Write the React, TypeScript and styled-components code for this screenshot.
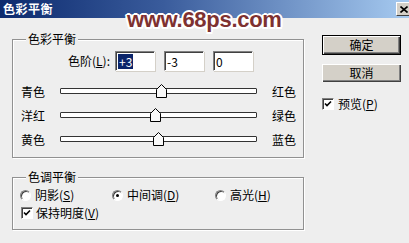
import React from 'react';
import styled, { createGlobalStyle } from 'styled-components';

const Global = createGlobalStyle`
  html, body { margin: 0; padding: 0; background: #eeeeee; }
  body {
    font-family: "Noto Sans CJK SC", "Noto Sans", sans-serif;
    font-size: 12px;
    color: #000;
  }
`;

const Window = styled.div`
  position: relative;
  width: 409px;
  height: 243px;
  overflow: hidden;
  background: #eeeeee;
  display: flex;
  flex-direction: column;
`;

const TitleBar = styled.div`
  flex: none;
  height: 18px;
  display: flex;
  align-items: center;
  justify-content: space-between;
  padding-left: 3px;
  background: linear-gradient(to right, #0c2a6e 0%, #3a5c9c 40%, #a6caf0 100%);
`;

const Title = styled.span`
  color: #fff;
  font-weight: bold;
  font-size: 12px;
  line-height: 14px;
  letter-spacing: 0.5px;
`;

const CloseBtn = styled.div`
  box-sizing: border-box;
  width: 16px;
  height: 14px;
  margin-right: -3px;
  background: #d4d0c8;
  border-top: 1px solid #fff;
  border-left: 1px solid #fff;
  border-right: 1px solid #404040;
  border-bottom: 1px solid #404040;
  display: flex;
  align-items: center;
  justify-content: center;
`;

const Watermark = styled.div`
  position: absolute;
  left: 127px;
  top: 9px;
  font-family: "Liberation Sans", Arial, sans-serif;
  font-weight: bold;
  font-size: 22px;
  line-height: 22px;
  letter-spacing: -0.3px;
  color: #7e3131;
  text-shadow:
    2px 0 0 #fff, -2px 0 0 #fff, 0 2px 0 #fff, 0 -2px 0 #fff,
    1.5px 1.5px 0 #fff, -1.5px 1.5px 0 #fff, 1.5px -1.5px 0 #fff, -1.5px -1.5px 0 #fff;
  pointer-events: none;
`;

const Body = styled.div`
  display: flex;
  padding-left: 12px;
`;

const LeftCol = styled.div`
  width: 292px;
  padding-top: 21px;
  display: flex;
  flex-direction: column;
  gap: 19px;
`;

const Group = styled.div<{ $h: number; $pt: number }>`
  position: relative;
  box-sizing: border-box;
  height: ${(p) => p.$h}px;
  padding-top: ${(p) => p.$pt}px;
  border: 1px solid #919191;
  box-shadow: 1px 1px 0 #fff, inset 1px 1px 0 #fff;
`;

const Legend = styled.span`
  position: absolute;
  top: -9px;
  left: 13px;
  padding: 0 2px;
  background: #eeeeee;
  line-height: 16px;
`;

const LevelRow = styled.div`
  display: flex;
  align-items: center;
  height: 20px;
  padding-left: 40px;
`;

const LevelLabel = styled.span`
  width: 57px;
  text-align: right;
  margin-right: 5px;
  line-height: 14px;
`;

const Fields = styled.div`
  display: flex;
  gap: 9px;
`;

const TextField = styled.div`
  box-sizing: border-box;
  width: 40px;
  height: 20px;
  background: #fff;
  border-top: 1px solid #808080;
  border-left: 1px solid #808080;
  border-bottom: 1px solid #fff;
  border-right: 1px solid #fff;
  box-shadow: inset 1px 1px 0 #404040, 1px 1px 0 #d4d0c8;
  padding: 1px 0 0 2px;
  display: flex;
  align-items: center;
  line-height: 15px;
`;

const Selected = styled.span`
  background: #0a246a;
  color: #fff;
  padding: 0 1px;
`;

const Sliders = styled.div`
  margin-top: 9px;
  display: flex;
  flex-direction: column;
`;

const SliderRow = styled.div`
  display: flex;
  align-items: center;
  height: 24px;
  padding-left: 8px;
`;

const SideLabel = styled.span<{ $w?: number }>`
  width: ${(p) => (p.$w ? `${p.$w}px` : 'auto')};
  line-height: 14px;
`;

const Track = styled.div`
  position: relative;
  box-sizing: border-box;
  width: 197px;
  height: 6px;
  margin-bottom: 3px;
  margin-right: 15px;
  background: #fff;
  border: 1px solid #333;
  border-radius: 1px;
`;

const Thumb = styled.svg`
  position: absolute;
  top: -5px;
  width: 11px;
  height: 14px;
`;

const RadioRow = styled.div`
  display: flex;
  align-items: center;
  height: 16px;
  padding-left: 7px;
`;

const Option = styled.label<{ $w?: number }>`
  display: flex;
  align-items: center;
  width: ${(p) => (p.$w ? `${p.$w}px` : 'auto')};
  line-height: 14px;
`;

const Radio = styled.span<{ $on?: boolean }>`
  position: relative;
  box-sizing: border-box;
  width: 11px;
  height: 11px;
  margin-right: 4px;
  border-radius: 50%;
  background: #fff;
  border: 1px solid;
  border-color: #808080 #fff #fff #808080;
  box-shadow: inset 1px 1px 0 #404040;
  display: flex;
  align-items: center;
  justify-content: center;
  &::after {
    content: '';
    display: ${(p) => (p.$on ? 'block' : 'none')};
    width: 3px;
    height: 3px;
    border-radius: 50%;
    background: #000;
  }
`;

const CheckRow = styled.div<{ $pl: number; $mt: number }>`
  display: flex;
  align-items: center;
  height: 16px;
  padding-left: ${(p) => p.$pl}px;
  margin-top: ${(p) => p.$mt}px;
`;

const CheckBox = styled.span<{ $gap: number }>`
  box-sizing: border-box;
  width: 12px;
  height: 12px;
  margin-right: ${(p) => p.$gap}px;
  background: #fff;
  border-top: 1px solid #808080;
  border-left: 1px solid #808080;
  border-bottom: 1px solid #fff;
  border-right: 1px solid #fff;
  box-shadow: inset 1px 1px 0 #404040;
  display: flex;
  align-items: center;
  justify-content: center;
`;

const CheckText = styled.span`
  line-height: 14px;
`;

const RightCol = styled.div`
  width: 79px;
  margin-left: 18px;
  padding-top: 17px;
  display: flex;
  flex-direction: column;
`;

const Button = styled.div<{ $default?: boolean }>`
  box-sizing: border-box;
  height: ${(p) => (p.$default ? 20 : 18)}px;
  margin-bottom: ${(p) => (p.$default ? 9 : 0)}px;
  background: #d4d0c8;
  border: ${(p) => (p.$default ? '1px solid #000' : 'none')};
  box-shadow: inset 1px 1px 0 #fff, inset -1px -1px 0 #404040, inset -2px -2px 0 #808080;
  display: flex;
  align-items: center;
  justify-content: center;
  line-height: 14px;
`;

const U = styled.span`
  text-decoration: underline;
  text-underline-offset: 1px;
`;

const Check = () => (
  <svg width="8" height="8" viewBox="0 0 8 8">
    <path d="M1 3.5 L3 5.5 L7 1.5" stroke="#000" strokeWidth="1.6" fill="none" />
  </svg>
);

const sliders = [
  { left: '青色', right: '红色', value: 3 },
  { left: '洋红', right: '绿色', value: -3 },
  { left: '黄色', right: '蓝色', value: 0 },
];

export default function App() {
  return (
    <>
      <Global />
      <Window>
        <TitleBar>
          <Title>色彩平衡</Title>
          <CloseBtn>
            <svg width="8" height="7" viewBox="0 0 8 7">
              <path d="M0.5 0.5 L7.5 6.5 M7.5 0.5 L0.5 6.5" stroke="#000" strokeWidth="1.6" />
            </svg>
          </CloseBtn>
        </TitleBar>
        <Body>
          <LeftCol>
            <Group $h={119} $pt={11}>
              <Legend>色彩平衡</Legend>
              <LevelRow>
                <LevelLabel>
                  色阶(<U>L</U>):
                </LevelLabel>
                <Fields>
                  <TextField>
                    <Selected>+3</Selected>
                  </TextField>
                  <TextField>-3</TextField>
                  <TextField>0</TextField>
                </Fields>
              </LevelRow>
              <Sliders>
                {sliders.map((s) => (
                  <SliderRow key={s.left}>
                    <SideLabel $w={39}>{s.left}</SideLabel>
                    <Track>
                      <Thumb
                        viewBox="0 0 11 14"
                        style={{ left: `${((s.value + 100) / 200) * 197 - 6.5}px` }}
                      >
                        <polygon
                          points="0.5,5.5 5.5,0.5 10.5,5.5 10.5,13.5 0.5,13.5"
                          fill="#f8f8f8"
                          stroke="#000"
                          strokeWidth="1"
                        />
                      </Thumb>
                    </Track>
                    <SideLabel>{s.right}</SideLabel>
                  </SliderRow>
                ))}
              </Sliders>
            </Group>
            <Group $h={53} $pt={9}>
              <Legend>色调平衡</Legend>
              <RadioRow>
                <Option $w={92}>
                  <Radio />
                  阴影(<U>S</U>)
                </Option>
                <Option $w={103}>
                  <Radio $on />
                  中间调(<U>D</U>)
                </Option>
                <Option>
                  <Radio />
                  高光(<U>H</U>)
                </Option>
              </RadioRow>
              <CheckRow $pl={8} $mt={2}>
                <CheckBox $gap={3}>
                  <Check />
                </CheckBox>
                <CheckText>
                  保持明度(<U>V</U>)
                </CheckText>
              </CheckRow>
            </Group>
          </LeftCol>
          <RightCol>
            <Button $default>确定</Button>
            <Button>取消</Button>
            <CheckRow $pl={0} $mt={14}>
              <CheckBox $gap={4}>
                <Check />
              </CheckBox>
              <CheckText>
                预览(<U>P</U>)
              </CheckText>
            </CheckRow>
          </RightCol>
        </Body>
        <Watermark>www.68ps.com</Watermark>
      </Window>
    </>
  );
}
